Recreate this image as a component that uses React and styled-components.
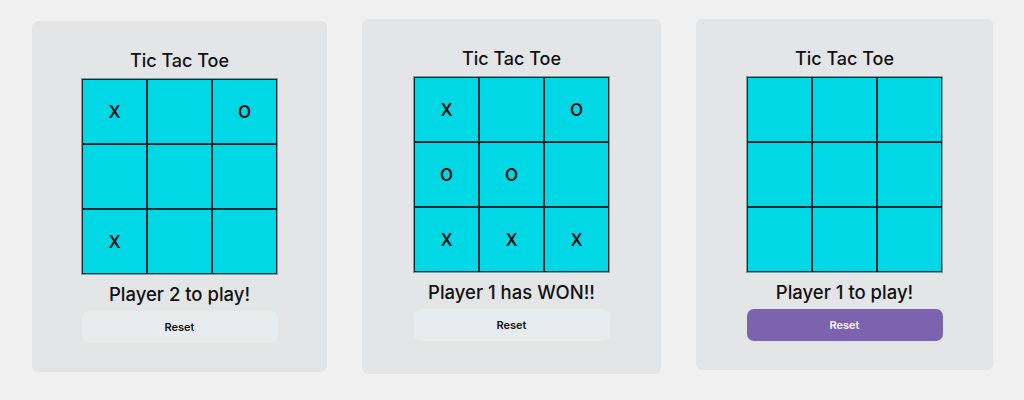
import React from 'react';
import styled, { createGlobalStyle } from 'styled-components';

const GlobalStyle = createGlobalStyle`
  body {
    margin: 0;
    background: #f0f0f0;
    font-family: Inter, "Open Sans", sans-serif;
    color: #111;
  }
`;

const Page = styled.div`
  display: flex;
  align-items: flex-start;
  gap: 35px;
  padding: 19px 0 0 32px;
  height: 400px;
  box-sizing: border-box;
`;

const Card = styled.div`
  width: ${(p) => p.$width}px;
  margin-top: ${(p) => p.$top}px;
  box-sizing: border-box;
  padding: 26px 0 ${(p) => p.$bottom}px;
  background: #e4e5e7;
  border-radius: 6px;
  display: flex;
  flex-direction: column;
  align-items: center;
`;

const Title = styled.h1`
  margin: 0 0 3px;
  font-size: 18px;
  font-weight: 500;
  line-height: 28px;
`;

const Board = styled.div`
  display: grid;
  grid-template-columns: repeat(3, 65px);
  grid-template-rows: repeat(3, 65px);
  border: 1px solid #8a9a9c;
`;

const Cell = styled.div`
  box-sizing: border-box;
  border: 1px solid #0b2a2e;
  background: #00d8e6;
  display: flex;
  align-items: center;
  justify-content: center;
  font-size: 17px;
  font-weight: 600;
`;

const Status = styled.p`
  margin: 6px 0 4px;
  font-size: 18.5px;
  font-weight: 500;
  line-height: 26px;
`;

const ResetButton = styled.button`
  width: 196px;
  height: 32px;
  border: none;
  border-radius: 7px;
  background: ${(p) => (p.$primary ? '#7b63b0' : '#e6ecee')};
  color: ${(p) => (p.$primary ? '#fff' : '#111')};
  font-family: inherit;
  font-size: 11px;
  font-weight: 600;
  cursor: pointer;
`;

const games = [
  {
    board: ['X', '', 'O', '', '', '', 'X', '', ''],
    status: 'Player 2 to play!',
    width: 295,
    top: 2,
    bottom: 29,
  },
  {
    board: ['X', '', 'O', 'O', 'O', '', 'X', 'X', 'X'],
    status: 'Player 1 has WON!!',
    width: 299,
    top: 0,
    bottom: 33,
  },
  {
    board: ['', '', '', '', '', '', '', '', ''],
    status: 'Player 1 to play!',
    width: 297,
    top: 0,
    bottom: 29,
    primary: true,
  },
];

function App() {
  return (
    <>
      <GlobalStyle />
      <Page>
        {games.map((g, i) => (
          <Card key={i} $width={g.width} $top={g.top} $bottom={g.bottom}>
            <Title>Tic Tac Toe</Title>
            <Board>
              {g.board.map((v, j) => (
                <Cell key={j}>{v}</Cell>
              ))}
            </Board>
            <Status>{g.status}</Status>
            <ResetButton $primary={g.primary}>Reset</ResetButton>
          </Card>
        ))}
      </Page>
    </>
  );
}

export default App;
